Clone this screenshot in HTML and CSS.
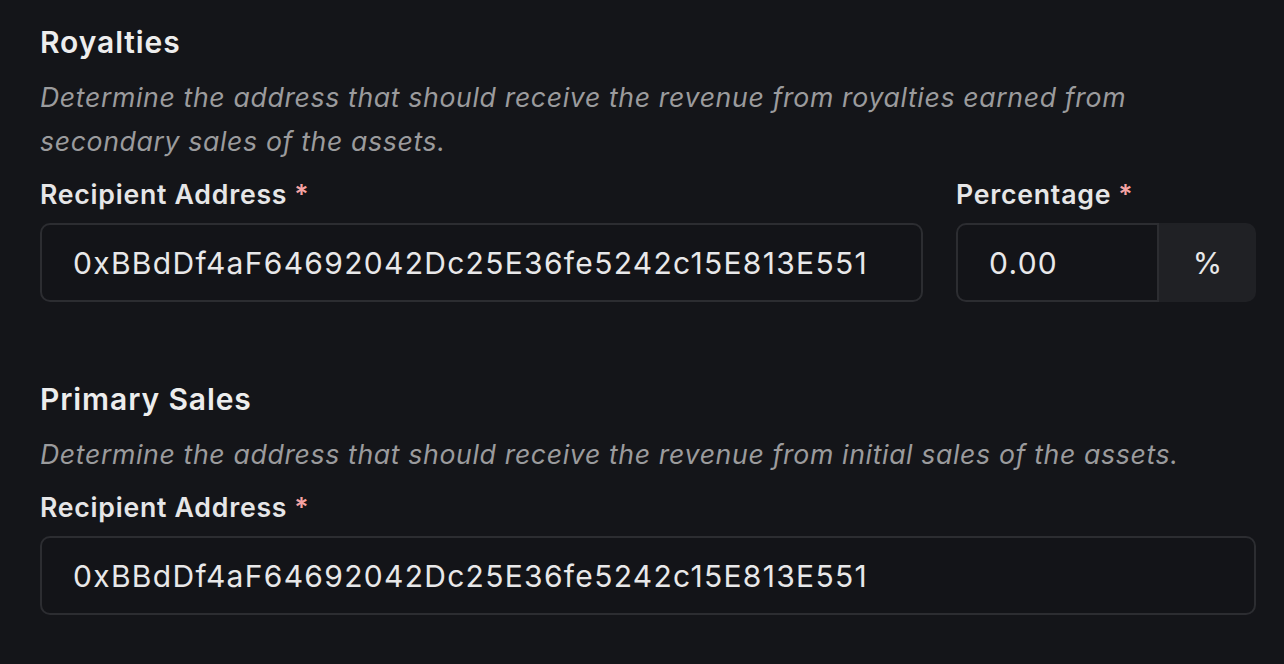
FILE: index.html
```html
<!DOCTYPE html>
<html lang="en">
<head>
<meta charset="utf-8">
<title>Royalties</title>
<link rel="stylesheet" href="styles.css">
</head>
<body>
<main class="page">
  <section class="section">
    <h2 class="heading">Royalties</h2>
    <p class="desc">Determine the address that should receive the revenue from royalties earned from secondary sales of the assets.</p>
    <div class="row">
      <div class="field">
        <label class="label">Recipient Address<span class="req">*</span></label>
        <div class="input">0xBBdDf4aF64692042Dc25E36fe5242c15E813E551</div>
      </div>
      <div class="field">
        <label class="label">Percentage<span class="req">*</span></label>
        <div class="group">
          <div class="input input-left">0.00</div>
          <div class="addon">%</div>
        </div>
      </div>
    </div>
  </section>
  <section class="section section-2">
    <h2 class="heading">Primary Sales</h2>
    <p class="desc">Determine the address that should receive the revenue from initial sales of the assets.</p>
    <div class="field">
      <label class="label">Recipient Address<span class="req">*</span></label>
      <div class="input">0xBBdDf4aF64692042Dc25E36fe5242c15E813E551</div>
    </div>
  </section>
</main>
</body>
</html>
```

FILE: styles.css
```css
html, body {
  margin: 0;
  padding: 0;
  background: #141519;
}
body {
  font-family: Inter, "Noto Sans", sans-serif;
  color: #ededed;
}
.page {
  width: 1216px;
  padding: 24px 0 0 40px;
}
.section {
  display: flex;
  flex-direction: column;
}
.section-2 {
  margin-top: 79px;
}
.heading {
  margin: 0;
  font-size: 30px;
  line-height: 36px;
  font-weight: 600;
  letter-spacing: 0.9px;
  color: #ededed;
}
.desc {
  margin: 15px 0 0;
  font-size: 26.67px;
  line-height: 44px;
  font-style: italic;
  letter-spacing: 0.63px;
  color: #9b9b9d;
}
.row {
  display: grid;
  grid-template-columns: 1fr 300px;
  column-gap: 33px;
}
.field {
  display: flex;
  flex-direction: column;
  margin-top: 11px;
}
.label {
  font-size: 26.67px;
  line-height: 40px;
  font-weight: 600;
  letter-spacing: 0.75px;
  color: #e6e6e7;
  margin-bottom: 9px;
}
.req {
  color: #f5a3a3;
  margin-left: 7px;
}
.input {
  box-sizing: border-box;
  height: 79px;
  border: 2px solid #2c2d31;
  border-radius: 10px;
  background: #131418;
  display: flex;
  align-items: center;
  padding: 0 31px;
  font-size: 30px;
  letter-spacing: 1.3px;
  color: #e8e8e9;
}
.group {
  display: flex;
}
.input-left {
  flex: 1;
  border-radius: 10px 0 0 10px;
}
.addon {
  box-sizing: border-box;
  width: 97px;
  height: 79px;
  background: #202125;
  border-radius: 0 10px 10px 0;
  display: flex;
  align-items: center;
  justify-content: center;
  font-size: 30px;
  color: #e8e8e9;
}
```
